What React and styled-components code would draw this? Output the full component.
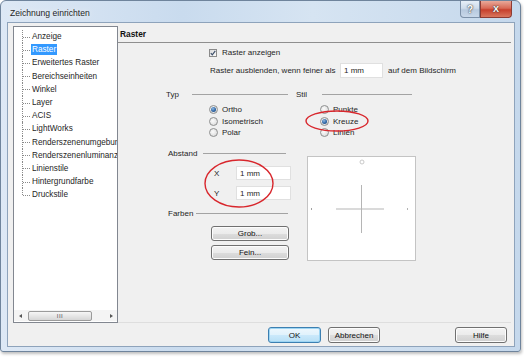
import React from 'react';
import styled, { createGlobalStyle } from 'styled-components';

const Global = createGlobalStyle`
  html, body { margin: 0; padding: 0; background: #ffffff; }
  body {
    font-family: "Liberation Sans", Arial, sans-serif;
    font-size: 8px;
    color: #262626;
  }
  #root { width: 524px; height: 357px; }
`;

const Window = styled.div`
  position: relative;
  width: 521px;
  height: 352px;
  box-sizing: border-box;
  border: 1px solid #6f849c;
  border-radius: 6px 6px 3px 3px;
  background: linear-gradient(90deg, #dde8f5 0%, #c9dbee 35%, #d6e4f2 60%, #c5d8ec 100%);
  display: flex;
  flex-direction: column;
  box-shadow: 1px 2px 3px rgba(0, 0, 0, 0.25);
`;

const TitleBar = styled.div`
  height: 21px;
  display: flex;
  align-items: flex-start;
`;

const Title = styled.div`
  padding: 3px 0 0 9px;
  line-height: 18px;
  font-size: 8.6px;
  color: #1e1e1e;
  text-shadow: 0 0 6px rgba(255, 255, 255, 0.9);
`;

const Captions = styled.div`
  margin-left: auto;
  margin-right: 8px;
  display: flex;
`;

const CaptionButton = styled.div`
  width: ${p => p.w}px;
  height: 17px;
  box-sizing: border-box;
  border: 1px solid ${p => (p.close ? '#8d3b33' : '#7c90a8')};
  border-top: none;
  border-radius: ${p => (p.close ? '0 0 4px 0' : '0 0 0 4px')};
  background: ${p =>
    p.close
      ? 'linear-gradient(180deg, #e9a99a 0%, #d86a56 45%, #c7402d 55%, #d9765e 100%)'
      : 'linear-gradient(180deg, #e6eef7 0%, #cfdceb 45%, #b7c9de 55%, #c9d8ea 100%)'};
  display: flex;
  align-items: center;
  justify-content: center;
  color: #ffffff;
  font-weight: bold;
  font-size: ${p => (p.close ? 9 : 10)}px;
  text-shadow: 0 0 2px #3b3b3b, 0 0 1px #3b3b3b;
`;

const Client = styled.div`
  flex: 1;
  margin: 0 5px 4px 6px;
  border: 1px solid #8ea3bb;
  background: #f0f0f0;
  display: grid;
  grid-template-columns: 105px 393px;
  grid-template-rows: 297px 1fr;
  padding: 3px 0 0 5px;
`;

const TreeBox = styled.div`
  box-sizing: border-box;
  border: 1px solid #828790;
  background: #ffffff;
  display: flex;
  flex-direction: column;
  overflow: hidden;
`;

const TreeList = styled.ul`
  flex: 1;
  list-style: none;
  margin: 0;
  padding: 3px 0 0 8px;
  overflow: hidden;
`;

const TreeItem = styled.li`
  position: relative;
  height: 13.2px;
  line-height: 13.2px;
  padding-left: 10px;
  white-space: nowrap;
  &::before {
    content: '';
    position: absolute;
    left: 0;
    top: 0;
    height: ${p => (p.last ? '50%' : '100%')};
    border-left: 1px dotted #8a8a8a;
  }
  &::after {
    content: '';
    position: absolute;
    left: 1px;
    width: 7px;
    top: 50%;
    border-top: 1px dotted #8a8a8a;
  }
`;

const TreeLabel = styled.span`
  display: inline-block;
  line-height: 11px;
  padding: 0 1px;
  margin-left: -1px;
  font-size: 8.2px;
  background: ${p => (p.selected ? '#3399ff' : 'transparent')};
  color: ${p => (p.selected ? '#ffffff' : '#262626')};
`;

const HScroll = styled.div`
  height: 11px;
  margin: 0 0 1px 0;
  display: flex;
  align-items: center;
  background: #f4f4f4;
`;

const ArrowCell = styled.div`
  width: 12px;
  height: 11px;
  display: flex;
  align-items: center;
  justify-content: center;
`;

const Arrow = styled.div`
  width: 0;
  height: 0;
  border-top: 2.5px solid transparent;
  border-bottom: 2.5px solid transparent;
  ${p => (p.left ? 'border-right: 3px solid #555;' : 'border-left: 3px solid #555;')}
`;

const Thumb = styled.div`
  width: 64px;
  height: 10px;
  margin-left: 2px;
  box-sizing: border-box;
  border: 1px solid #9b9b9b;
  border-radius: 2px;
  background: linear-gradient(180deg, #f6f6f6 0%, #e6e6e6 50%, #d6d6d6 100%);
  display: flex;
  align-items: center;
  justify-content: center;
  font-size: 6px;
  letter-spacing: 0.5px;
  color: #555;
`;

const Track = styled.div`
  flex: 1;
`;

const Panel = styled.div`
  display: flex;
  flex-direction: column;
  border-bottom: 1px solid #dedede;
`;

const PanelHeader = styled.div`
  height: 17px;
  box-sizing: border-box;
  border-bottom: 1px solid #8f8f8f;
  padding-left: 2px;
  line-height: 16px;
  font-weight: bold;
  font-size: 8.4px;
  color: #111;
`;

const Row = styled.div`
  display: flex;
  align-items: center;
  margin-top: ${p => p.mt || 0}px;
  margin-left: ${p => p.ml || 0}px;
  height: ${p => p.h}px;
  gap: ${p => p.gap || 0}px;
`;

const CheckBox = styled.div`
  width: 8px;
  height: 8px;
  box-sizing: border-box;
  border: 1px solid #8a8a8a;
  background: linear-gradient(135deg, #dcdcdc, #fafafa);
  display: flex;
  align-items: center;
  justify-content: center;
`;

const FixedLabel = styled.span`
  display: inline-block;
  width: ${p => p.w}px;
  padding-left: ${p => p.pl || 0}px;
  box-sizing: border-box;
  white-space: nowrap;
`;

const TextInput = styled.div`
  width: ${p => p.w}px;
  height: ${p => p.h}px;
  box-sizing: border-box;
  border: 1px solid #e0e0e0;
  background: #ffffff;
  padding-left: 3px;
  display: flex;
  align-items: center;
`;

const Columns = styled.div`
  margin-top: 11px;
  margin-left: 48px;
  display: flex;
  gap: 4px;
`;

const Column = styled.div`
  width: ${p => p.w}px;
  display: flex;
  flex-direction: column;
`;

const GroupHeader = styled.div`
  height: 10px;
  display: flex;
  align-items: center;
  margin-top: ${p => p.mt || 0}px;
  padding-right: ${p => p.pr || 0}px;
`;

const GroupLine = styled.div`
  flex: 1;
  border-top: 1px solid #a3a3a3;
`;

const RadioGroup = styled.div`
  margin-top: 5px;
  margin-left: ${p => p.ml}px;
  display: flex;
  flex-direction: column;
`;

const RadioRow = styled.div`
  height: 11.5px;
  display: flex;
  align-items: center;
  gap: 4px;
`;

const RadioCircle = styled.div`
  width: 9px;
  height: 9px;
  box-sizing: border-box;
  border-radius: 50%;
  border: 1px solid #8e8f8f;
  background: radial-gradient(circle at 40% 40%, #fbfbfb 0%, #e4e4e4 60%, #cfcfcf 100%);
  display: flex;
  align-items: center;
  justify-content: center;
`;

const RadioDot = styled.div`
  width: 5px;
  height: 5px;
  border-radius: 50%;
  background: radial-gradient(circle at 40% 35%, #8fb8e2 0%, #2f67a6 55%, #1a3f6e 100%);
`;

const PushButton = styled.div`
  width: ${p => p.w}px;
  height: ${p => p.h}px;
  margin-top: ${p => p.mt || 0}px;
  margin-left: ${p => p.ml || 0}px;
  box-sizing: border-box;
  border: 1px solid ${p => (p.primary ? '#3c7fb1' : '#707070')};
  border-radius: 3px;
  background: ${p =>
    p.primary
      ? 'linear-gradient(180deg, #eef7fd 0%, #e0f2fc 50%, #cbe9fb 51%, #b8dff5 100%)'
      : 'linear-gradient(180deg, #f3f3f3 0%, #ebebeb 50%, #dddddd 51%, #d0d0d0 100%)'};
  box-shadow: ${p => (p.primary ? 'inset 0 0 0 1px #9dd5f3' : 'inset 0 0 0 1px #fcfcfc')};
  display: flex;
  align-items: center;
  justify-content: center;
  color: #111;
`;

const Preview = styled.div`
  margin-top: 17.5px;
  margin-left: 12px;
  width: 109px;
  height: 105px;
  box-sizing: border-box;
  border: 1px solid #c4c4c4;
  background: #ffffff;
`;

const ButtonBar = styled.div`
  grid-column: 1 / -1;
  display: flex;
  justify-content: flex-end;
  align-items: flex-start;
  padding: 4px 4px 0 0;
  gap: 7px;
`;

const Spacer = styled.div`
  width: 61px;
`;

const Annotations = styled.svg`
  position: absolute;
  left: -1px;
  top: -1px;
  pointer-events: none;
`;

const treeItems = [
  'Anzeige',
  'Raster',
  'Erweitertes Raster',
  'Bereichseinheiten',
  'Winkel',
  'Layer',
  'ACIS',
  'LightWorks',
  'Renderszenenumgebung',
  'Renderszenenluminanz',
  'Linienstile',
  'Hintergrundfarbe',
  'Druckstile',
];

function Radio({ label, checked }) {
  return (
    <RadioRow>
      <RadioCircle>{checked && <RadioDot />}</RadioCircle>
      <span>{label}</span>
    </RadioRow>
  );
}

export default function App() {
  return (
    <>
      <Global />
      <Window>
        <TitleBar>
          <Title>Zeichnung einrichten</Title>
          <Captions>
            <CaptionButton w={20}>?</CaptionButton>
            <CaptionButton w={32} close>X</CaptionButton>
          </Captions>
        </TitleBar>
        <Client>
          <TreeBox>
            <TreeList>
              {treeItems.map((t, i) => (
                <TreeItem key={t} last={i === treeItems.length - 1}>
                  <TreeLabel selected={t === 'Raster'}>{t}</TreeLabel>
                </TreeItem>
              ))}
            </TreeList>
            <HScroll>
              <ArrowCell>
                <Arrow left />
              </ArrowCell>
              <Thumb>III</Thumb>
              <Track />
              <ArrowCell>
                <Arrow />
              </ArrowCell>
            </HScroll>
          </TreeBox>
          <Panel>
            <PanelHeader>Raster</PanelHeader>
            <Row mt={5} ml={91} h={9} gap={5}>
              <CheckBox>
                <svg width="6" height="6" viewBox="0 0 6 6">
                  <path d="M0.8 3.1 L2.3 4.8 L5.3 0.9" fill="none" stroke="#3d4f6a" strokeWidth="1.2" />
                </svg>
              </CheckBox>
              <span>Raster anzeigen</span>
            </Row>
            <Row mt={6} ml={92} h={15}>
              <FixedLabel w={130}>Raster ausblenden, wenn feiner als</FixedLabel>
              <TextInput w={43} h={15}>1 mm</TextInput>
              <FixedLabel w={80} pl={5}>auf dem Bildschirm</FixedLabel>
            </Row>
            <Columns>
              <Column w={125}>
                <GroupHeader pr={3}>
                  <FixedLabel w={26}>Typ</FixedLabel>
                  <GroupLine />
                </GroupHeader>
                <RadioGroup ml={43}>
                  <Radio label="Ortho" checked />
                  <Radio label="Isometrisch" />
                  <Radio label="Polar" />
                </RadioGroup>
                <GroupHeader mt={9.5} pr={5}>
                  <FixedLabel w={37} pl={2}>Abstand</FixedLabel>
                  <GroupLine />
                </GroupHeader>
                <Row mt={8} h={14}>
                  <FixedLabel w={70} pl={48}>X</FixedLabel>
                  <TextInput w={55} h={14}>1 mm</TextInput>
                </Row>
                <Row mt={6} h={14}>
                  <FixedLabel w={70} pl={48}>Y</FixedLabel>
                  <TextInput w={55} h={14}>1 mm</TextInput>
                </Row>
                <GroupHeader mt={8} pr={3}>
                  <FixedLabel w={30} pl={2}>Farben</FixedLabel>
                  <GroupLine />
                </GroupHeader>
                <PushButton w={78} h={15} mt={8} ml={45}>Grob...</PushButton>
                <PushButton w={78} h={15} mt={4} ml={45}>Fein...</PushButton>
              </Column>
              <Column w={121}>
                <GroupHeader pr={4}>
                  <FixedLabel w={27} pl={1}>Stil</FixedLabel>
                  <GroupLine />
                </GroupHeader>
                <RadioGroup ml={25}>
                  <Radio label="Punkte" />
                  <Radio label="Kreuze" checked />
                  <Radio label="Linien" />
                </RadioGroup>
                <Preview>
                  <svg width="107" height="103" viewBox="0 0 107 103">
                    <circle cx="54" cy="5" r="2" fill="none" stroke="#bdbdbd" strokeWidth="0.8" />
                    <line x1="28" y1="52" x2="76" y2="52" stroke="#b5b5b5" strokeWidth="1" />
                    <line x1="53.5" y1="28" x2="53.5" y2="76" stroke="#b5b5b5" strokeWidth="1" />
                    <rect x="3" y="51.5" width="1" height="1" fill="#444" />
                    <rect x="99" y="51.5" width="1" height="1" fill="#666" />
                  </svg>
                </Preview>
              </Column>
            </Columns>
          </Panel>
          <ButtonBar>
            <PushButton w={53} h={16} primary>OK</PushButton>
            <PushButton w={52} h={16}>Abbrechen</PushButton>
            <Spacer />
            <PushButton w={52} h={16}>Hilfe</PushButton>
          </ButtonBar>
        </Client>
        <Annotations width="521" height="352" viewBox="0 0 521 352">
          <ellipse cx="337" cy="121" rx="31" ry="10" fill="none" stroke="#d8262c" strokeWidth="1.4" />
          <ellipse cx="239" cy="183.5" rx="34" ry="23.5" fill="none" stroke="#d8262c" strokeWidth="1.4" />
        </Annotations>
      </Window>
    </>
  );
}
